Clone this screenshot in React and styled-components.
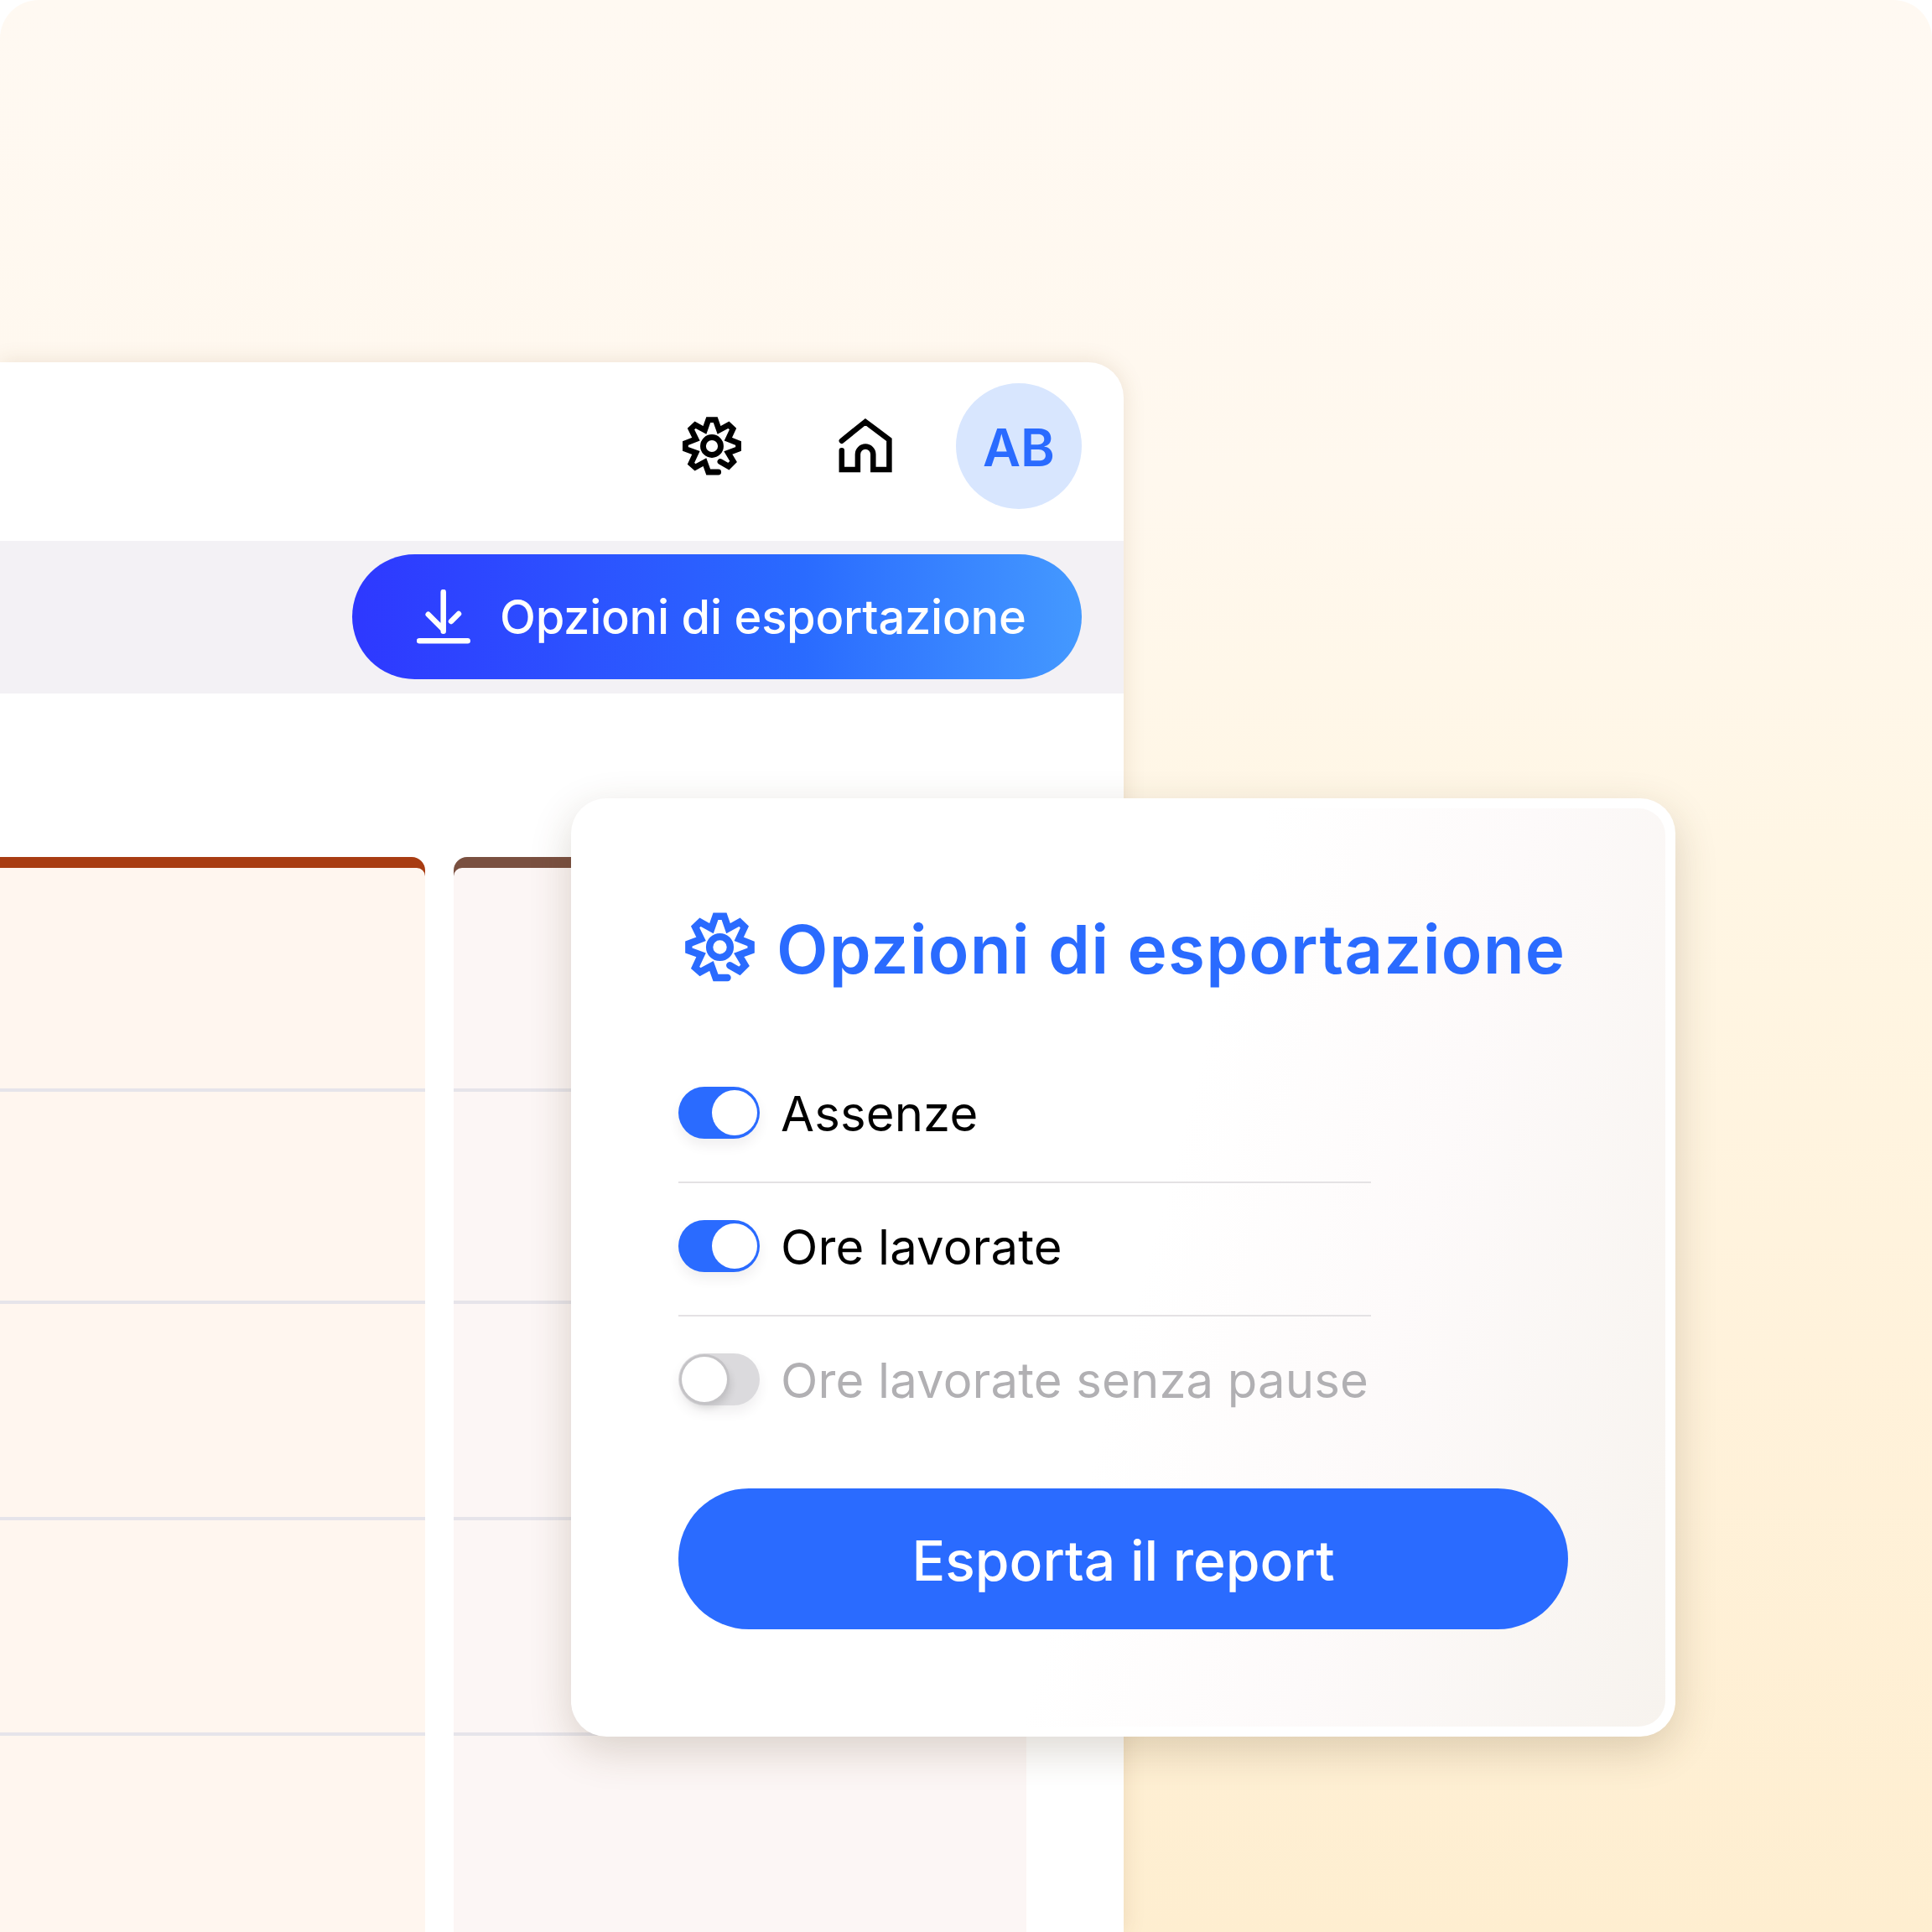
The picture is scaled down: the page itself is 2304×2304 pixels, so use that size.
import React from "react";
import styled, { createGlobalStyle } from "styled-components";

const Global = createGlobalStyle`
  html, body { margin: 0; padding: 0; background: #ffffff; }
  * { box-sizing: border-box; }
`;

const BLUE = "#2a6bff";
const FONT = `"Inter", "Liberation Sans", sans-serif`;

const Page = styled.main`
  position: relative;
  width: 2304px;
  height: 2304px;
  overflow: hidden;
  padding-top: 432px;
  border-radius: 46px 46px 0 0;
  background: linear-gradient(180deg, #fff9f2 0%, #fff8ee 25%, #fff6e4 45%, #fff2db 70%, #feeed0 100%);
  font-family: ${FONT};
`;

const Win = styled.section`
  width: 1340px;
  height: 1872px;
  display: flex;
  flex-direction: column;
  background: #fff;
  border-top-right-radius: 42px;
  box-shadow: 0 0 26px rgba(130, 90, 40, 0.15);
`;

const TopBar = styled.header`
  flex: none;
  height: 213px;
  padding: 25px 50px 0 0;
  display: flex;
  align-items: flex-start;
  justify-content: flex-end;
`;

const Icon = styled.svg`
  display: block;
  flex: none;
  color: ${(p) => p.$color};
`;

const GearSlot = styled.div`
  margin: 38px 114px 0 0;
`;

const HomeSlot = styled.div`
  margin: 41px 76px 0 0;
`;

const Avatar = styled.div`
  width: 150px;
  height: 150px;
  border-radius: 50%;
  background: #d8e6fe;
  color: ${BLUE};
  display: flex;
  align-items: center;
  justify-content: center;
  padding-top: 3px;
  font-size: 62px;
  font-weight: 600;
`;

const Band = styled.div`
  flex: none;
  height: 182px;
  padding: 16px 50px 0 0;
  background: #f3f1f5;
  display: flex;
  justify-content: flex-end;
  align-items: flex-start;
`;

const ExportPill = styled.button`
  width: 870px;
  height: 149px;
  border: 0;
  border-radius: 75px;
  padding: 0 0 0 77px;
  display: flex;
  align-items: center;
  gap: 35px;
  background: linear-gradient(90deg, #2e38ff 0%, #2a6bff 62%, #4499ff 100%);
  color: #fff;
  font-family: ${FONT};
  font-size: 56px;
  font-weight: 500;
  letter-spacing: -0.25px;
`;

const Board = styled.div`
  flex: 1;
  min-height: 0;
  overflow: hidden;
  padding-top: 195px;
  display: flex;
  gap: 34px;
  align-items: stretch;
`;

const Column = styled.div`
  width: ${(p) => p.$w}px;
  padding-top: 13px;
  border-radius: ${(p) => (p.$first ? "0 16px 0 0" : "16px 16px 0 0")};
  background: ${(p) => p.$bar};
  display: flex;
`;

const ColumnBody = styled.div`
  flex: 1;
  border-radius: ${(p) => (p.$first ? "0 10px 0 0" : "10px 10px 0 0")};
  background: ${(p) => p.$bg};
  display: flex;
  flex-direction: column;
`;

const Cell = styled.div`
  height: ${(p) => p.$h}px;
  flex: none;
  border-bottom: 4px solid #e6e4ea;
`;

const Popup = styled.section`
  position: absolute;
  left: 681px;
  top: 952px;
  width: 1317px;
  height: 1119px;
  border-radius: 42px;
  background: #fff;
  box-shadow: 0 16px 50px rgba(80, 60, 30, 0.2);
  padding: 12px 12px 12px 0;
`;

const PopupInner = styled.div`
  height: 100%;
  border-radius: 40px 32px 32px 40px;
  background: linear-gradient(105deg, #ffffff 0%, #ffffff 52%, #fdfafa 72%, #f7f3ee 100%);
  padding: 123px 0 0 128px;
`;

const Title = styled.h2`
  margin: 0 0 0 6px;
  height: 85px;
  display: flex;
  align-items: center;
  gap: 24px;
  color: ${BLUE};
  font-size: 80px;
  font-weight: 600;
  white-space: nowrap;
  letter-spacing: 1.15px;
`;

const TitleText = styled.span`
  padding-top: 4px;
`;

const Options = styled.div`
  margin-top: 124px;
  width: 826px;
  display: flex;
  flex-direction: column;
`;

const Option = styled.div`
  height: 115px;
  margin-bottom: 44px;
  display: flex;
  align-items: flex-start;
  gap: 25px;
  border-bottom: ${(p) => (p.$last ? "0" : "2px solid #e4e2e4")};
`;

const Track = styled.div`
  position: relative;
  width: 97px;
  height: 62px;
  border-radius: 31px;
  flex: none;
  background: ${(p) => (p.$on ? BLUE : "#dbdadd")};
  box-shadow: 0 8px 14px rgba(60, 50, 60, 0.08);
`;

const Knob = styled.div`
  position: absolute;
  top: 4px;
  left: ${(p) => (p.$on ? "40px" : "4px")};
  width: 54px;
  height: 54px;
  border-radius: 50%;
  background: #fff;
  box-shadow: ${(p) => (p.$on ? "none" : "0 0 0 3px #c4c3c6, 4px 6px 10px rgba(0,0,0,.12)")};
`;

const Label = styled.span`
  padding-top: 1px;
  font-size: 58px;
  line-height: 62px;
  font-weight: 400;
  letter-spacing: 0.15px;
  white-space: nowrap;
  color: ${(p) => (p.$off ? "#b1b0b3" : "#000")};
`;

const Submit = styled.button`
  display: block;
  width: 1061px;
  height: 168px;
  margin-top: 2px;
  padding: 4px 0 0;
  border: 0;
  border-radius: 84px;
  background: ${BLUE};
  color: #fff;
  font-family: ${FONT};
  font-size: 66px;
  font-weight: 500;
`;

const GEAR = "M270 272 L305 292 L325 272 L303 235 L346 219 L346 195 L303 178 L323 135 L305 118 L265 140 L250 97 L220 97 L205 140 L165 118 L147 135 L168 178 L124 195 L124 219 L168 235 L147 280 L165 296 L205 274 L220 316 L262 316";

const Gear = ({ size, weight, color }) => (
  <Icon $color={color} width={size} height={size} viewBox="105 77 260 260" fill="none" stroke="currentColor" strokeWidth={weight}>
    <path d={GEAR} strokeLinecap="round" strokeLinejoin="miter" />
    <circle cx="235" cy="207" r="37" />
  </Icon>
);

const Home = () => (
  <Icon $color="#000" width="64" height="67" viewBox="0 0 64 67" fill="none" stroke="currentColor" strokeWidth="6.5">
    <path
      d="M3.8 27.7 L32 5 L60.4 26.3 V62 H41.3 V43.7 A9.2 9.2 0 0 0 22.9 43.7 V62 H3.8 V39.3"
      strokeLinecap="round"
    />
  </Icon>
);

const Download = () => (
  <Icon $color="#fff" width="64" height="66" viewBox="0 0 64 66" fill="none" stroke="currentColor" strokeWidth="6.5" strokeLinecap="round">
    <path d="M31.7 3 V49.7 M13.7 29.7 L31 47 M41 38 L50 29 M3 61.3 H60.7" />
  </Icon>
);

const rows = [267, 253, 258, 257, 300];

const columns = [
  { w: 507, bar: "#a83c12", bg: "#fff6ef", first: true },
  { w: 683, bar: "#7a5040", bg: "#fcf6f5", first: false },
];

export default function App() {
  return (
    <Page>
      <Global />
      <Win>
        <TopBar>
          <GearSlot><Gear size={74} weight={24} color="#000" /></GearSlot>
          <HomeSlot><Home /></HomeSlot>
          <Avatar>AB</Avatar>
        </TopBar>
        <Band>
          <ExportPill><Download />Opzioni di esportazione</ExportPill>
        </Band>
        <Board>
          {columns.map((c) => (
            <Column key={c.w} $first={c.first} $w={c.w} $bar={c.bar}>
              <ColumnBody $first={c.first} $bg={c.bg}>
                {rows.map((h, i) => <Cell key={i} $h={h} />)}
              </ColumnBody>
            </Column>
          ))}
        </Board>
      </Win>
      <Popup>
        <PopupInner>
          <Title>
            <Gear size={87} weight={25} color={BLUE} />
            <TitleText>Opzioni di esportazione</TitleText>
          </Title>
          <Options>
            <Option><Track $on><Knob $on /></Track><Label>Assenze</Label></Option>
            <Option><Track $on><Knob $on /></Track><Label>Ore lavorate</Label></Option>
            <Option $last><Track><Knob /></Track><Label $off>Ore lavorate senza pause</Label></Option>
          </Options>
          <Submit>Esporta il report</Submit>
        </PopupInner>
      </Popup>
    </Page>
  );
}
